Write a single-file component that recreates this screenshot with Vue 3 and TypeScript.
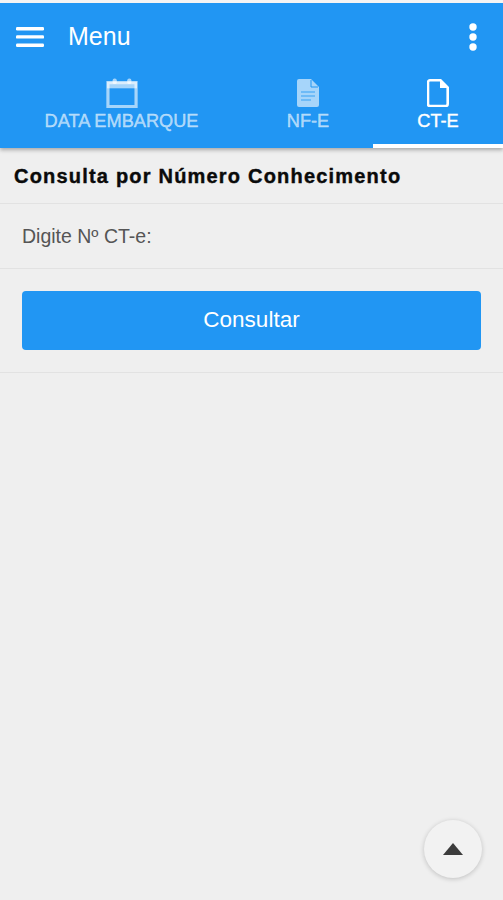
<script setup lang="ts">
interface Tab {
  label: string;
  icon: 'calendar' | 'filled' | 'outline';
  active?: boolean;
}

const tabs: Tab[] = [
  { label: 'DATA EMBARQUE', icon: 'calendar' },
  { label: 'NF-E', icon: 'filled' },
  { label: 'CT-E', icon: 'outline', active: true },
];
</script>

<template>
  <div class="page">
    <header class="header">
      <div class="toolbar">
        <svg class="menu-icon" width="30" height="24" viewBox="0 0 30 24">
          <rect x="1" y="2" width="28" height="3.4" rx="1.2" />
          <rect x="1" y="10.2" width="28" height="3.4" rx="1.2" />
          <rect x="1" y="18.6" width="28" height="3.4" rx="1.2" />
        </svg>
        <span class="title">Menu</span>
        <svg class="more-icon" width="10" height="28" viewBox="0 0 10 28">
          <circle cx="5" cy="4" r="3.7" />
          <circle cx="5" cy="14" r="3.7" />
          <circle cx="5" cy="24" r="3.7" />
        </svg>
      </div>
      <nav class="tabs">
        <div
          v-for="tab in tabs"
          :key="tab.label"
          :class="['tab', { 'tab--active': tab.active, 'tab--wide': tab.icon === 'calendar' }]"
        >
          <svg v-if="tab.icon === 'calendar'" class="tab-icon tab-icon--cal" width="34" height="32" viewBox="0 0 34 32">
            <path d="M2 5h30v25.5H2Z" fill="none" stroke="currentColor" stroke-width="3.4" />
            <rect x="1" y="4" width="32" height="7" fill="currentColor" />
            <rect x="7" y="0.5" width="4.4" height="6" rx="2" fill="currentColor" />
            <rect x="22.6" y="0.5" width="4.4" height="6" rx="2" fill="currentColor" />
          </svg>
          <svg v-else-if="tab.icon === 'filled'" class="tab-icon" width="22" height="28" viewBox="0 0 22 28">
            <path d="M2 0h12l8 8v18a2 2 0 0 1-2 2H2a2 2 0 0 1-2-2V2a2 2 0 0 1 2-2Z" fill="currentColor" />
            <path d="M14 1v7h7" fill="none" stroke="#2196f3" stroke-width="1" />
            <path d="M4 13h14M4 17h14M4 21h10" stroke="#2196f3" stroke-width="1.4" opacity="0.55" />
          </svg>
          <svg v-else class="tab-icon" width="22" height="28" viewBox="0 0 22 28">
            <path d="M3 1.3h10.5l7.2 7.2V25a2 2 0 0 1-2 2H3a2 2 0 0 1-2-2V3.3a2 2 0 0 1 2-2Z" fill="none" stroke="currentColor" stroke-width="2.6" />
            <path d="M13 1v8h8Z" fill="currentColor" />
          </svg>
          <span class="tab-label">{{ tab.label }}</span>
        </div>
      </nav>
    </header>

    <h1 class="heading">Consulta por Número Conhecimento</h1>

    <section class="form">
      <div class="field">Digite Nº CT-e:</div>
      <div class="actions">
        <button class="submit" type="button">Consultar</button>
      </div>
    </section>

    <button class="to-top" type="button" aria-label="Topo">
      <svg width="20" height="12" viewBox="0 0 20 12">
        <path d="M10 0 20 12H0Z" fill="#3c3c3c" />
      </svg>
    </button>
  </div>
</template>

<style scoped>
.page {
  position: relative;
  height: 900px;
  padding-top: 3px;
  box-sizing: border-box;
  overflow: hidden;
  background: #efefef;
  font-family: "Liberation Sans", Arial, sans-serif;
}

.page::before {
  content: "";
  position: absolute;
  top: 0;
  left: 0;
  right: 0;
  height: 3px;
  background: #f4f4f4;
}

.header {
  height: 145px;
  display: flex;
  flex-direction: column;
  background: #2196f3;
  color: #fff;
  box-shadow: 0 2px 4px rgba(0, 0, 0, 0.3);
}

.toolbar {
  height: 67px;
  display: flex;
  align-items: center;
  padding: 0 25px 0 15px;
}

.menu-icon {
  fill: #fff;
}

.title {
  margin-left: 23px;
  font-size: 25px;
}

.more-icon {
  margin-left: auto;
  fill: #fff;
}

.tabs {
  flex: 1;
  display: flex;
}

.tab {
  width: 130px;
  display: flex;
  flex-direction: column;
  align-items: center;
  box-sizing: border-box;
  padding-top: 9px;
  color: rgba(255, 255, 255, 0.6);
}

.tab--wide {
  width: 243px;
}

.tab--active {
  color: #fff;
  border-bottom: 4px solid #fff;
}

.tab-icon {
  display: block;
  height: 28px;
}

.tab-icon--cal {
  height: 30px;
  margin-top: -1px;
  margin-bottom: -1px;
}

.tab-label {
  margin-top: 3px;
  font-size: 18.2px;
  line-height: 22px;
  -webkit-text-stroke: 0.4px currentColor;
}

.heading {
  margin: 0;
  padding: 16px 14px 0;
  height: 55px;
  box-sizing: border-box;
  font-size: 20px;
  line-height: 24px;
  font-weight: 700;
  letter-spacing: 1.2px;
  -webkit-text-stroke: 0.4px currentColor;
  color: #0a0a0a;
}

.form {
  border-top: 1px solid #e2e2e2;
  border-bottom: 1px solid #e2e2e2;
}

.field {
  height: 64px;
  display: flex;
  align-items: center;
  padding: 0 22px;
  border-bottom: 1px solid #e2e2e2;
  font-size: 19.5px;
  color: #555;
}

.actions {
  padding: 22px 22px 22px;
}

.submit {
  display: block;
  width: 100%;
  height: 59px;
  padding: 0 0 2px;
  border: 0;
  border-radius: 4px;
  background: #2196f3;
  color: #fff;
  font-family: inherit;
  font-size: 22.5px;
}

.to-top {
  position: absolute;
  right: 21px;
  bottom: 22px;
  width: 58px;
  height: 58px;
  display: flex;
  align-items: center;
  justify-content: center;
  padding: 0;
  border: 0;
  border-radius: 50%;
  background: #f2f2f2;
  box-shadow: 0 1px 5px rgba(0, 0, 0, 0.2);
}
</style>
